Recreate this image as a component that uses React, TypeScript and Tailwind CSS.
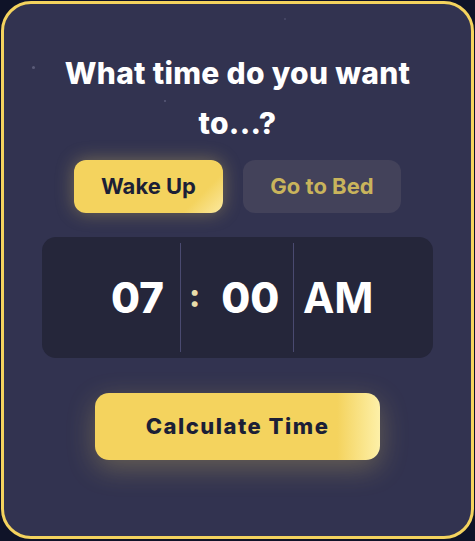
export default function App() {
  return (
    <div className="flex h-[541px] w-[475px] bg-[#0f1328] p-px font-['Inter','Noto_Sans',sans-serif]">
      <div className="relative flex h-[538px] w-full flex-col items-center overflow-hidden rounded-[30px] border-[3px] border-[#f4d35e] bg-[#323350] px-[38px]">
        {/* stars */}
        <span className="absolute left-[28px] top-[62px] h-[3px] w-[3px] rounded-full bg-[#5a5b78]" />
        <span className="absolute left-[160px] top-[96px] h-[2px] w-[2px] rounded-full bg-[#5a5b78]" />
        <span className="absolute left-[280px] top-[14px] h-[2px] w-[2px] rounded-full bg-[#4a4b68]" />

        <h1 className="mt-[44px] w-[390px] text-center text-[30px] font-extrabold leading-[50px] tracking-[0.3px] text-white">
          What time do you want to...?
        </h1>

        <div className="mt-[12px] flex gap-[20px]">
          <button
            type="button"
            className="h-[53px] w-[149px] rounded-[12px] bg-[linear-gradient(135deg,#f4d35e_0%,#f4d35e_80%,#fbe9a0_100%)] text-[22px] font-bold text-[#1c1f36] shadow-[0_0_18px_rgba(244,211,94,0.35)]"
          >
            Wake Up
          </button>
          <button
            type="button"
            className="h-[53px] w-[158px] rounded-[12px] bg-[#43425a] text-[22px] font-bold text-[#c9b45c]"
          >
            Go to Bed
          </button>
        </div>

        <div className="mt-[24px] flex h-[121px] w-full items-center rounded-[14px] bg-[#25263a] py-[6px]">
          <div className="flex h-full w-[139px] items-center justify-end border-r border-[#4a4a70] pr-[16px] text-[42px] font-extrabold text-white">
            07
          </div>
          <div className="flex h-full w-[113px] items-center border-r border-[#4a4a70] pl-[8px] text-[42px] font-extrabold text-white">
            <span className="mb-[4px] text-[32px] text-[#e8dcaa]">:</span>
            <span className="ml-[21px]">00</span>
          </div>
          <div className="flex h-full flex-1 items-center pl-[9px] text-[42px] font-bold text-white">AM</div>
        </div>

        <button
          type="button"
          className="mt-[35px] h-[67px] w-[285px] rounded-[14px] bg-[linear-gradient(90deg,#f4d35e_0%,#f4d35e_85%,#fdf0a8_100%)] text-[22px] font-extrabold tracking-[1.5px] text-[#1c1f36] shadow-[0_8px_28px_rgba(244,211,94,0.28)]"
        >
          Calculate Time
        </button>
      </div>
    </div>
  );
}
